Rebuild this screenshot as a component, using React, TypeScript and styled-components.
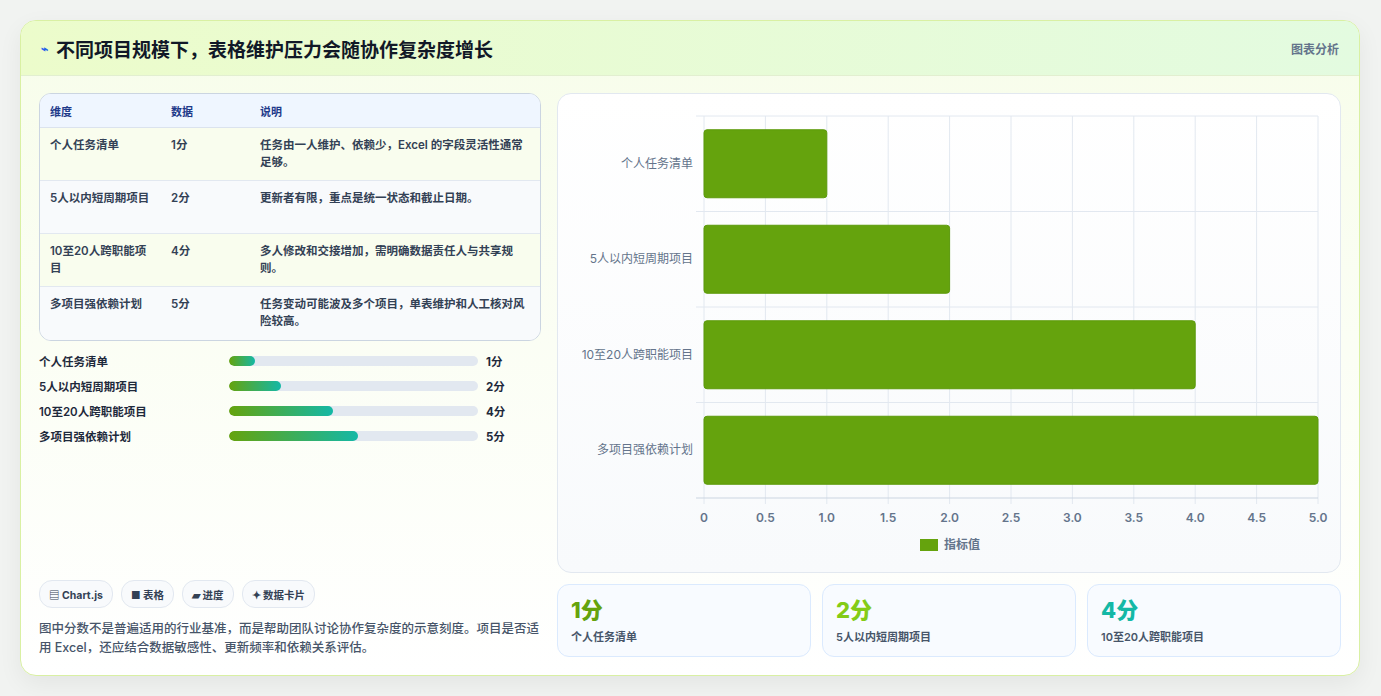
import React from 'react';
import styled, { createGlobalStyle } from 'styled-components';

const Global = createGlobalStyle`
  body { margin: 0; background: #f1f3f1; font-family: Inter, "Noto Sans CJK SC", sans-serif; color: #1e293b; }
`;

const rows = [
  { name: '个人任务清单', value: 1, note: '任务由一人维护、依赖少，Excel 的字段灵活性通常足够。' },
  { name: '5人以内短周期项目', value: 2, note: '更新者有限，重点是统一状态和截止日期。' },
  { name: '10至20人跨职能项目', value: 4, note: '多人修改和交接增加，需明确数据责任人与共享规则。' },
  { name: '多项目强依赖计划', value: 5, note: '任务变动可能波及多个项目，单表维护和人工核对风险较高。' },
];

export default function App() {
  return (
    <>
      <Global />
      <Page>
        <Card>
          <Header>
            <Title><Spark>⌁</Spark>不同项目规模下，表格维护压力会随协作复杂度增长</Title>
            <Tag>图表分析</Tag>
          </Header>
          <Body>
            <Left>
              <Table>
                <HeadRow>
                  <span>维度</span><span>数据</span><span>说明</span>
                </HeadRow>
                {rows.map((r, i) => (
                  <Row key={r.name} $alt={i % 2 === 1}>
                    <span>{r.name}</span><span>{r.value}分</span><span>{r.note}</span>
                  </Row>
                ))}
              </Table>
              <Bars>
                {rows.map(r => (
                  <BarRow key={r.name}>
                    <span>{r.name}</span>
                    <Track><Fill style={{ width: `${r.value * 10.4}%` }} /></Track>
                    <b>{r.value}分</b>
                  </BarRow>
                ))}
              </Bars>
              <Spacer />
              <Chips>
                <Chip>▤ Chart.js</Chip>
                <Chip>■ 表格</Chip>
                <Chip>▰ 进度</Chip>
                <Chip>✦ 数据卡片</Chip>
              </Chips>
              <Note>图中分数不是普遍适用的行业基准，而是帮助团队讨论协作复杂度的示意刻度。项目是否适用 Excel，还应结合数据敏感性、更新频率和依赖关系评估。</Note>
            </Left>
            <Right>
              <ChartPanel>
                <Chart />
              </ChartPanel>
              <Stats>
                <Stat><StatNum $c="#65a30d">1分</StatNum><StatLabel>个人任务清单</StatLabel></Stat>
                <Stat><StatNum $c="#84cc16">2分</StatNum><StatLabel>5人以内短周期项目</StatLabel></Stat>
                <Stat><StatNum $c="#14b8a6">4分</StatNum><StatLabel>10至20人跨职能项目</StatLabel></Stat>
              </Stats>
            </Right>
          </Body>
        </Card>
      </Page>
    </>
  );
}

function Chart() {
  const x0 = 146, x1 = 760, y0 = 22, y1 = 404;
  const ticks = [0, 0.5, 1, 1.5, 2, 2.5, 3, 3.5, 4, 4.5, 5];
  const band = (y1 - y0) / 4;
  return (
    <svg width="784" height="478" style={{ display: 'block' }}>
      {ticks.map(t => {
        const x = x0 + (t / 5) * (x1 - x0);
        return (
          <g key={t}>
            <line x1={x} x2={x} y1={y0} y2={y1 + 6} stroke="#e2e8f0" />
            <text x={x} y={428} textAnchor="middle" fontSize="12" fontWeight="600" fill="#64748b" fontFamily="Inter, sans-serif">
              {t === 0 ? '0' : t.toFixed(1)}
            </text>
          </g>
        );
      })}
      {[0, 1, 2, 3, 4].map(i => (
        <line key={i} x1={x0 - 8} x2={x1} y1={y0 + i * band} y2={y0 + i * band} stroke={i === 4 ? '#cbd5e1' : '#e2e8f0'} />
      ))}
      {rows.map((r, i) => {
        const cy = y0 + band * i + band / 2;
        return (
          <g key={r.name}>
            <text x={x0 - 11} y={cy + 4} textAnchor="end" fontSize="12" fill="#64748b" fontFamily="Inter, 'Noto Sans CJK SC', sans-serif">{r.name}</text>
            <rect x={x0} y={cy - 34} width={(r.value / 5) * (x1 - x0)} height={68} rx="3" fill="#65a30d" stroke="#5c9a0a" />
          </g>
        );
      })}
      <rect x={362} y={445} width={18} height={12} fill="#65a30d" />
      <text x={386} y={455} fontSize="12" fontWeight="600" fill="#64748b" fontFamily="'Noto Sans CJK SC', sans-serif">指标值</text>
    </svg>
  );
}

const Page = styled.div`padding: 20px;`;
const Card = styled.div`
  width: 1340px; height: 656px; box-sizing: border-box;
  border: 1px solid #d9f0a3; border-radius: 16px; overflow: hidden;
  background: linear-gradient(180deg, #f7fdea 0%, #ffffff 100%);
  box-shadow: 0 8px 24px rgba(0,0,0,0.06);
  display: flex; flex-direction: column;
`;
const Header = styled.div`
  height: 55px; box-sizing: border-box; padding: 0 20px;
  display: flex; align-items: center; justify-content: space-between;
  background: linear-gradient(90deg, #ecfccb 0%, #e3fbe0 100%);
  border-bottom: 1px solid #e2efd0;
`;
const Title = styled.h1`
  margin: 0; font-size: 19px; font-weight: 700; color: #111827;
  display: flex; align-items: center; gap: 8px;
`;
const Spark = styled.span`color: #2563eb; font-size: 12px;`;
const Tag = styled.span`font-size: 12px; font-weight: 600; color: #64748b;`;
const Body = styled.div`
  flex: 1; display: grid; grid-template-columns: 502px 784px; gap: 16px;
  padding: 17px 18px 18px 18px;
`;
const Left = styled.div`display: flex; flex-direction: column;`;
const Table = styled.div`
  border: 1px solid #cbd5e1; border-radius: 12px; overflow: hidden; background: #fff;
`;
const HeadRow = styled.div`
  display: grid; grid-template-columns: 121px 89px 1fr; padding: 0 10px;
  height: 33px; align-items: center; background: #eff6ff;
  border-bottom: 1px solid #dbe3ee; font-size: 11px; font-weight: 700; color: #1e3a8a;
`;
const Row = styled.div<{ $alt: boolean }>`
  display: grid; grid-template-columns: 121px 89px 1fr; padding: 9px 10px 0;
  height: 53px; box-sizing: border-box; line-height: 17px;
  background: ${p => (p.$alt ? '#f8fafc' : '#f9fdee')};
  border-bottom: 1px solid #e2e8f0; font-size: 11.5px; font-weight: 600; color: #334155;
  &:last-child { border-bottom: none; }
  span:first-child { padding-right: 16px; }
`;
const Bars = styled.div`display: flex; flex-direction: column; gap: 9px; margin-top: 12px;`;
const BarRow = styled.div`
  display: grid; grid-template-columns: 182px 249px auto; column-gap: 8px; align-items: center;
  font-size: 11.5px; font-weight: 600; color: #1e293b; height: 16px;
  b { font-weight: 700; }
`;
const Track = styled.div`height: 10px; border-radius: 5px; background: #e2e8f0; overflow: hidden;`;
const Fill = styled.div`height: 100%; border-radius: 5px; background: linear-gradient(90deg, #65a30d, #14b8a6);`;
const Spacer = styled.div`flex: 1;`;
const Chips = styled.div`display: flex; gap: 8px;`;
const Chip = styled.span`
  height: 26px; padding: 0 9px; display: inline-flex; align-items: center;
  border: 1px solid #e2e8f0; border-radius: 13px; background: #f8fafc;
  font-size: 10.5px; font-weight: 700; color: #334155;
`;
const Note = styled.p`
  margin: 11px 0 0; font-size: 12.5px; line-height: 19px; color: #475569; font-weight: 500;
`;
const Right = styled.div`display: flex; flex-direction: column; gap: 11px;`;
const ChartPanel = styled.div`
  height: 480px; box-sizing: border-box; border: 1px solid #e2e8f0; border-radius: 14px;
  background: linear-gradient(180deg, #ffffff 0%, #f8fafc 100%); overflow: hidden;
`;
const Stats = styled.div`display: grid; grid-template-columns: repeat(3, 1fr); gap: 11px;`;
const Stat = styled.div`
  height: 73px; box-sizing: border-box; padding: 11px 13px;
  border: 1px solid #dbeafe; border-radius: 12px; background: #f8fbff;
`;
const StatNum = styled.div<{ $c: string }>`font-size: 22px; font-weight: 800; color: ${p => p.$c}; line-height: 28px;`;
const StatLabel = styled.div`font-size: 11px; font-weight: 600; color: #475569; margin-top: 4px;`;
